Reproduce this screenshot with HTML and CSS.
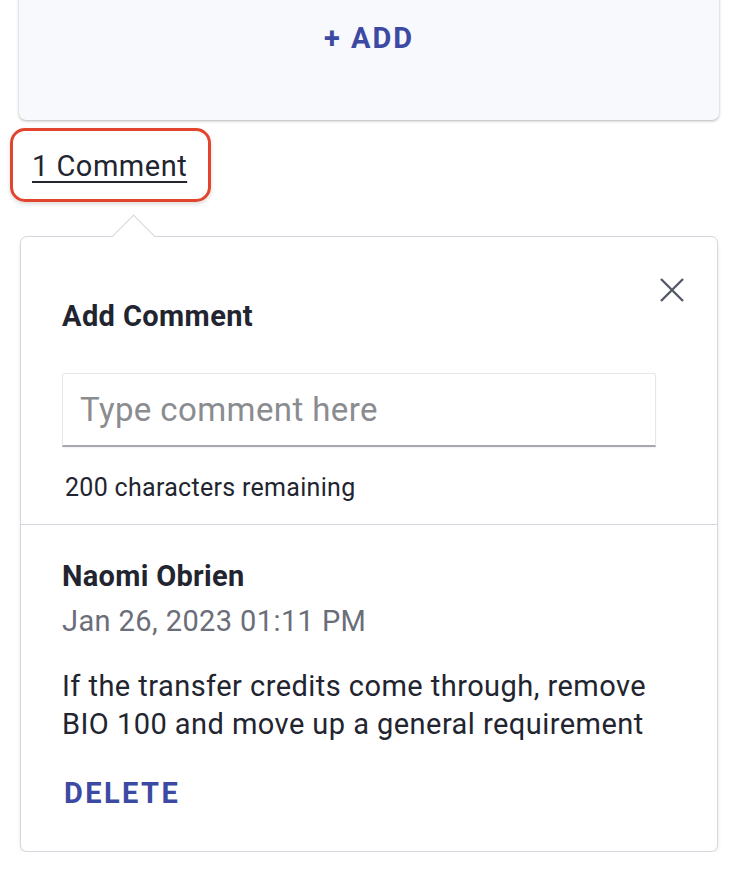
FILE: index.html
```html
<!DOCTYPE html>
<html lang="en">
<head>
  <meta charset="UTF-8" />
  <title>Comments</title>
  <link rel="stylesheet" href="styles.css">
</head>
<body>

  <div class="add-card">
    <button class="add-btn">+ ADD</button>
  </div>

  <div class="comment-link-wrap">
    <a class="comment-link" href="#">1 Comment</a>
  </div>

  <div class="popover">
    <div class="popover-head">
      <h3>Add Comment</h3>
      <button class="close-btn" aria-label="Close">
        <svg width="26" height="26" viewBox="0 0 26 26">
          <path d="M2 2 L24 24 M24 2 L2 24" stroke="#555a68" stroke-width="2.4" fill="none"/>
        </svg>
      </button>
    </div>
    <div class="comment-input">
      <input type="text" placeholder="Type comment here" />
    </div>
    <div class="remaining">200 characters remaining</div>

    <div class="comment">
      <div class="author">Naomi Obrien</div>
      <div class="date">Jan 26, 2023 01:11 PM</div>
      <p class="text">If the transfer credits come through, remove BIO 100 and move up a general requirement</p>
      <button class="delete-btn">DELETE</button>
    </div>
  </div>

</body>
</html>
```

FILE: styles.css
```css
html, body {
  margin: 0;
  background: #fff;
  font-family: Roboto, "Liberation Sans", sans-serif;
  color: #22252f;
}
body {
  padding: 0 19px;
}
.add-card {
  margin-top: -20px;
  height: 140px;
  background: #f7f9fc;
  border-radius: 0 0 7px 7px;
  box-shadow: 0 1px 3px rgba(0,0,0,0.3);
  display: flex;
  justify-content: center;
  padding-top: 39px;
  box-sizing: border-box;
}
.add-btn {
  background: none;
  border: none;
  font-family: inherit;
  font-size: 29px;
  font-weight: 700;
  letter-spacing: 2px;
  color: #3d4aa3;
  height: 38px;
  line-height: 38px;
  padding: 0;
}
.comment-link-wrap {
  margin: 8px 0 0 -9px;
  width: 201px;
  height: 74px;
  border: 3px solid #e2452d;
  border-radius: 15px;
  box-shadow: 0 2px 4px rgba(0,0,0,0.15);
  display: flex;
  align-items: center;
  padding: 2px 0 0 19px;
  box-sizing: border-box;
}
.comment-link {
  font-size: 29px;
  letter-spacing: 0.5px;
  color: #22252f;
  text-decoration: underline;
  text-underline-offset: 5px;
  text-decoration-thickness: 1.5px;
}
.popover {
  position: relative;
  margin: 34px 1px 0 1px;
  border: 1px solid #d6d7de;
  border-radius: 7px;
  box-shadow: 0 2px 4px rgba(0,0,0,0.08);
  background: #fff;
}
.popover::before {
  content: "";
  position: absolute;
  top: -16px;
  left: 97px;
  width: 30px;
  height: 30px;
  background: #fff;
  border-top: 1px solid #d6d7de;
  border-left: 1px solid #d6d7de;
  transform: rotate(45deg);
}
.popover-head {
  display: flex;
  justify-content: space-between;
  padding: 40px 32px 0 41px;
}
.popover-head h3 {
  margin: 21px 0 0 0;
  font-size: 29px;
  font-weight: 700;
  letter-spacing: 0.4px;
  line-height: 36px;
}
.close-btn {
  background: none;
  border: none;
  padding: 0;
  width: 26px;
  height: 26px;
  cursor: pointer;
}
.comment-input {
  margin: 39px 61px 0 41px;
}
.comment-input input {
  display: block;
  width: 100%;
  box-sizing: border-box;
  height: 74px;
  border: 1px solid #e6e7ea;
  border-bottom: 2px solid #a5a7ad;
  border-radius: 3px 3px 0 0;
  box-shadow: 0 1px 2px rgba(0,0,0,0.06);
  font-family: inherit;
  font-size: 33px;
  letter-spacing: 0.4px;
  padding: 0 17px;
  color: #22252f;
}
.comment-input input::placeholder {
  color: #8b8c90;
}
.remaining {
  margin-top: 26px;
  padding: 0 0 21px 44px;
  font-size: 25px;
  letter-spacing: 0.3px;
  line-height: 30px;
  border-bottom: 1px solid #d6d7de;
}
.comment {
  padding: 33px 41px 40px 41px;
}
.author {
  font-size: 29px;
  font-weight: 700;
  letter-spacing: 0.3px;
  line-height: 36px;
}
.date {
  margin-top: 9px;
  font-size: 29px;
  letter-spacing: 0.4px;
  line-height: 36px;
  color: #6b6e79;
}
.text {
  margin: 28px 0 0 0;
  font-size: 29px;
  line-height: 38px;
  letter-spacing: 0.45px;
}
.delete-btn {
  display: block;
  margin-top: 32px;
  background: none;
  border: none;
  padding: 0 0 0 2px;
  font-family: inherit;
  font-size: 29px;
  line-height: 36px;
  font-weight: 700;
  letter-spacing: 2.4px;
  color: #3d4aa3;
}
```
